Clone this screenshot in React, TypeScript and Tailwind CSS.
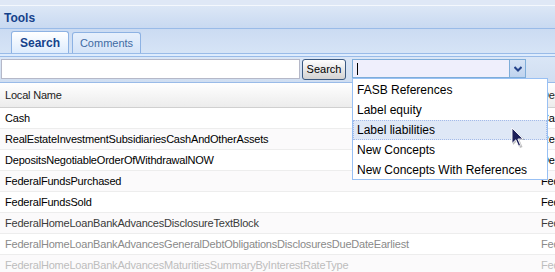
const rows = [
  { name: 'Cash', other: 'Cash', color: 'text-black' },
  { name: 'RealEstateInvestmentSubsidiariesCashAndOtherAssets', other: 'RealEstate', color: 'text-black' },
  { name: 'DepositsNegotiableOrderOfWithdrawalNOW', other: 'Deposits', color: 'text-black' },
  { name: 'FederalFundsPurchased', other: 'Federal', color: 'text-black' },
  { name: 'FederalFundsSold', other: 'Federal', color: 'text-black' },
  { name: 'FederalHomeLoanBankAdvancesDisclosureTextBlock', other: 'Federal', color: 'text-[#3a3a3a]' },
  { name: 'FederalHomeLoanBankAdvancesGeneralDebtObligationsDisclosuresDueDateEarliest', other: 'Federal', color: 'text-[#8a8a8a]' },
  { name: 'FederalHomeLoanBankAdvancesMaturitiesSummaryByInterestRateType', other: 'Federal', color: 'text-[#bdbdbd]' },
];

const options = ['FASB References', 'Label equity', 'Label liabilities', 'New Concepts', 'New Concepts With References'];

const Cursor = () => (
  <svg width="14" height="22" viewBox="0 0 14 22" className="absolute left-[511px] top-[127px]">
    <path d="M2,2 L2,18 L6,14 L9,21 L11.5,20 L8.5,13 L14,13 Z" fill="#000" opacity="0.25" />
    <path d="M1,1 L1,16.5 L4.8,12.8 L7.6,19.2 L9.6,18.3 L6.9,12 L12,12 Z" fill="#1c1f5a" stroke="#ffffff" strokeWidth="0.9" />
  </svg>
);

export default function App() {
  return (
    <div className="relative w-[555px] h-[272px] overflow-hidden bg-white font-['Liberation_Sans',Arial,sans-serif]">
      {/* top strip */}
      <div className="h-[5px] bg-[#dfe8f6]" />
      <div className="h-[1px] bg-[#f4f8fd]" />
      {/* panel header */}
      <div className="h-[23px] flex items-center pl-[4px] pt-[1px] bg-gradient-to-b from-[#dce7f6] to-[#c8d9f1] border-b border-[#99bbe8]">
        <span className="text-[12px] font-bold text-[#15428b]">Tools</span>
      </div>
      {/* tab strip */}
      <div className="h-[24px] flex items-end gap-[3px] pl-[11px] bg-gradient-to-b from-[#cbdbf2] to-[#d6e4f6]">
        <div className="w-[58px] h-[22px] flex items-center justify-center pt-[1px] rounded-t-[3px] border border-b-0 border-[#8db2e3] bg-gradient-to-b from-[#ffffff] to-[#deecfd] text-[12px] font-bold text-[#15428b]">
          Search
        </div>
        <div className="w-[69px] h-[21px] flex items-center justify-center pt-[1px] rounded-t-[3px] border border-b-0 border-[#8db2e3] bg-gradient-to-b from-[#e7f0fc] to-[#d5e4f8] text-[11px] text-[#416aa3]">
          Comments
        </div>
      </div>
      <div className="h-[4px] bg-[#deecfd] border-y border-[#99bbe8]" />
      {/* toolbar */}
      <div className="h-[26px] flex items-center pl-[1px] pb-[1px] bg-gradient-to-b from-[#dae6f6] to-[#d0def1] border-b border-[#99bbe8]">
        <div className="w-[299px] h-[20px] bg-white border border-[#b5b8c8]" />
        <button className="ml-[2px] w-[44px] h-[21px] rounded-[3px] border border-[#3b5a82] bg-gradient-to-b from-[#fdfdfd] to-[#d3d3d3] text-[11px] text-black flex items-center justify-center">
          Search
        </button>
        <div className="ml-[6px] flex h-[19px] mb-[1px]">
          <div className="w-[158px] h-full bg-[#efeffc] border border-[#7eadd9] flex items-center pl-[4px]">
            <div className="w-[1px] h-[12px] bg-black" />
          </div>
          <div className="w-[16px] h-full bg-gradient-to-b from-[#d5e3f6] to-[#bfd3ee] border border-l-0 border-[#7eadd9] flex items-center justify-center">
            <svg width="8" height="6" viewBox="0 0 8 6">
              <path d="M0.5,1 L4,4.5 L7.5,1" fill="none" stroke="#23428a" strokeWidth="2" />
            </svg>
          </div>
        </div>
      </div>
      {/* grid */}
      <div className="text-[11px] tracking-[-0.2px]">
        <div className="h-[25px] flex items-center pt-[1px] bg-gradient-to-b from-[#ffffff] to-[#ececec] border-b border-[#d0d0d0] whitespace-nowrap">
          <div className="w-[536px] shrink-0 pl-[5px] text-[#222]">Local Name</div>
          <div className="pl-[5px] text-[#222]">Description</div>
        </div>
        {rows.map((r, i) => (
          <div
            key={i}
            className={`h-[21px] flex items-center border-b border-[#ededed] whitespace-nowrap ${i % 2 === 1 ? 'bg-[#fbfafb]' : 'bg-white'} ${r.color}`}
          >
            <div className="w-[536px] shrink-0 pl-[5px]">{r.name}</div>
            <div className="pl-[5px]">{r.other}</div>
          </div>
        ))}
      </div>
      {/* combo dropdown */}
      <div className="absolute left-[352px] top-[78px] w-[196px] h-[102px] bg-white border border-[#98c0f4] py-[1px] text-[12px]">
        {options.map((o, i) => (
          <div
            key={o}
            className={`h-[20px] flex items-center pl-[3px] ${i === 2 ? 'bg-[#dfe8f6] border border-dotted border-[#a3bae9]' : 'border border-transparent'} text-black`}
          >
            {o}
          </div>
        ))}
      </div>
      <Cursor />
    </div>
  );
}
